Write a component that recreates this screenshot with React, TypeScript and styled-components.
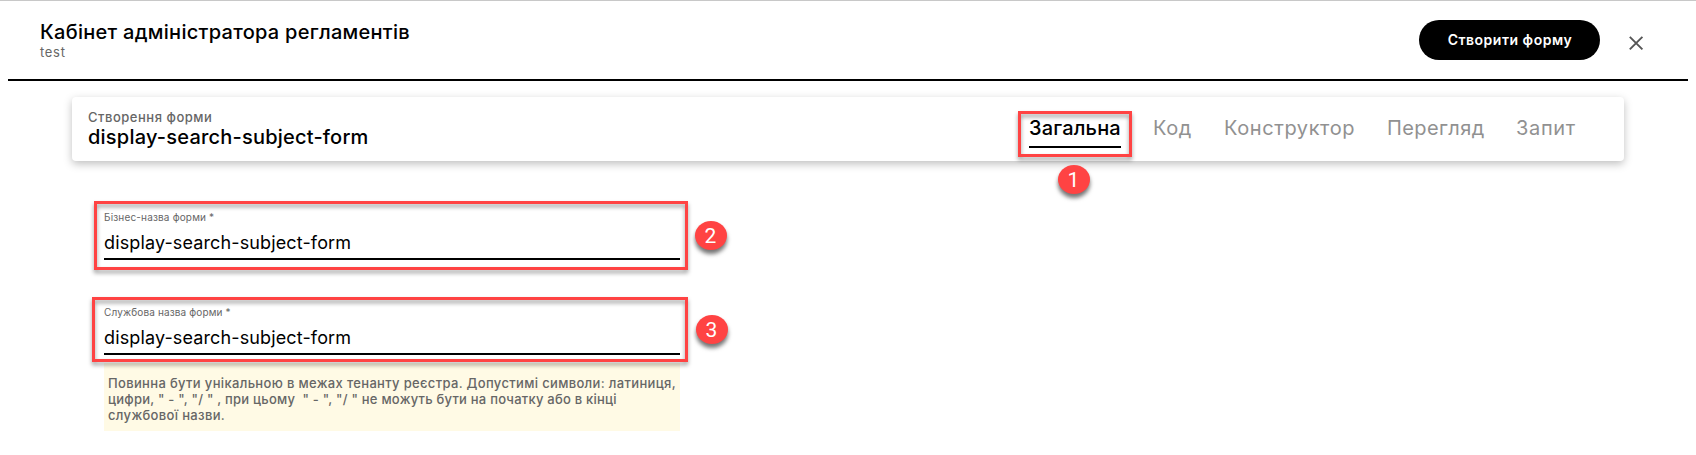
import React from "react";
import styled, { createGlobalStyle } from "styled-components";

const GlobalStyle = createGlobalStyle`
  * { box-sizing: border-box; }
  body { margin: 0; background: #fff; font-family: Inter, "Noto Sans", sans-serif; color: #000; }
`;

const Page = styled.div`
  height: 455px;
  padding: 0 8px;
  border-top: 1px solid #c8c8c8;
  overflow: hidden;
`;

const Header = styled.header`
  display: flex;
  justify-content: space-between;
  align-items: flex-start;
  height: 80px;
  padding: 19px 40px 0 32px;
  border-bottom: 2px solid #000;
`;

const Text = styled.div<{ $size: number; $line: number; $spacing?: number; $weight?: number; $muted?: boolean }>`
  font-size: ${(p) => p.$size}px;
  line-height: ${(p) => p.$line}px;
  letter-spacing: ${(p) => p.$spacing ?? 0}px;
  font-weight: ${(p) => p.$weight ?? 400};
  color: ${(p) => (p.$muted ? "#666" : "#000")};
  white-space: pre;
`;

const Actions = styled.div`
  display: flex;
  gap: 24px;
`;

const PrimaryButton = styled.button`
  width: 181px;
  height: 40px;
  padding: 0 0 0 1px;
  border: 0;
  border-radius: 20px;
  background: #000;
  color: #fff;
  font: 600 14px/20px Inter, sans-serif;
  letter-spacing: 0.5px;
`;

const CloseButton = styled.button`
  display: flex;
  width: 24px;
  height: 24px;
  margin-top: 11px;
  padding: 0;
  border: 0;
  background: none;
`;

const Card = styled.section`
  display: flex;
  justify-content: space-between;
  height: 64px;
  margin: 16px 64px 0;
  padding: 12px 48px 0 16px;
  border-radius: 4px;
  background: #fff;
  box-shadow: 0 3px 8px rgba(0, 0, 0, 0.25);
`;

const Tabs = styled.nav`
  display: flex;
  gap: 32px;
  padding-top: 7px;
`;

const Tab = styled.div<{ $width: number; $spacing: number; $active?: boolean }>`
  position: relative;
  width: ${(p) => p.$width}px;
  height: 32px;
  border-bottom: 2px solid ${(p) => (p.$active ? "#000" : "transparent")};
  font-size: 20px;
  line-height: 24px;
  font-weight: ${(p) => (p.$active ? 500 : 400)};
  letter-spacing: ${(p) => p.$spacing}px;
  color: ${(p) => (p.$active ? "#000" : "#919191")};
  white-space: nowrap;
`;

const Form = styled.form`
  display: flex;
  flex-direction: column;
  gap: 46px;
  width: 576px;
  margin: 50px 0 0 96px;
`;

const Field = styled.div`
  position: relative;
`;

const FieldValue = styled.div`
  height: 30px;
  margin-top: 7px;
  border-bottom: 2px solid #000;
  font-size: 18px;
  line-height: 26px;
  letter-spacing: 0.13px;
`;

const Hint = styled.div`
  margin-top: 8px;
  padding: 12px 4px 8px;
  background: #fffae5;
`;

const Frame = styled.div<{ $top: number; $left: number; $width: number; $height: number }>`
  position: absolute;
  top: ${(p) => p.$top}px;
  left: ${(p) => p.$left}px;
  width: ${(p) => p.$width}px;
  height: ${(p) => p.$height}px;
  border: 3px solid #ff4343;
  filter: drop-shadow(0 3.5px 2px rgba(0, 0, 0, 0.4));
  pointer-events: none;
`;

const Badge = styled.div<{ $top: number; $left: number }>`
  position: absolute;
  top: ${(p) => p.$top}px;
  left: ${(p) => p.$left}px;
  width: 32px;
  height: 29px;
  border-radius: 50%;
  background: #ff4343;
  box-shadow: 0 4px 4px rgba(0, 0, 0, 0.55);
  color: #fff;
  font: 400 21px/30px Roboto, sans-serif;
  letter-spacing: 0;
  text-align: center;
`;

const tabs = [
  { label: "Код", width: 39, spacing: 0.6 },
  { label: "Конструктор", width: 131, spacing: 0.58 },
  { label: "Перегляд", width: 97, spacing: 0.42 },
  { label: "Запит", width: 60, spacing: 0.65 },
];

export default function App() {
  return (
    <>
      <GlobalStyle />
      <Page>
        <Header>
          <div>
            <Text $size={20} $line={24} $weight={500} $spacing={0.28}>Кабінет адміністратора регламентів</Text>
            <Text $size={13} $line={16} $spacing={0.7} $muted>test</Text>
          </div>
          <Actions>
            <PrimaryButton>Створити форму</PrimaryButton>
            <CloseButton aria-label="Закрити">
              <svg width="24" height="24" viewBox="0 0 24 24" stroke="#555" strokeWidth="1.9">
                <path d="M5.8 5.8 18.4 18.4M18.4 5.8 5.8 18.4" />
              </svg>
            </CloseButton>
          </Actions>
        </Header>
        <Card>
          <div>
            <Text $size={13} $line={16} $weight={500} $spacing={0.52} $muted>Створення форми</Text>
            <Text $size={20} $line={24} $weight={500} $spacing={0.21}>display-search-subject-form</Text>
          </div>
          <Tabs>
            <Tab $width={92} $spacing={0.18} $active>
              Загальна
              <Frame $top={-5} $left={-11} $width={114} $height={46} />
              <Badge $top={48.5} $left={28.5}>1</Badge>
            </Tab>
            {tabs.map((t) => (
              <Tab key={t.label} $width={t.width} $spacing={t.spacing}>{t.label}</Tab>
            ))}
          </Tabs>
        </Card>
        <Form>
          <Field>
            <Text $size={10} $line={12} $spacing={0.17} $muted>Бізнес-назва форми *</Text>
            <FieldValue>display-search-subject-form</FieldValue>
            <Frame $top={-10} $left={-10} $width={594} $height={69} />
            <Badge $top={10} $left={590.5}>2</Badge>
          </Field>
          <Field>
            <Text $size={10} $line={12} $spacing={0.14} $muted>Службова назва форми *</Text>
            <FieldValue>display-search-subject-form</FieldValue>
            <Hint>
              <Text $size={13} $line={16} $weight={500} $spacing={0.34} $muted>Повинна бути унікальною в межах тенанту реєстра. Допустимі символи: латиниця,</Text>
              <Text $size={13} $line={16} $weight={500} $spacing={0.23} $muted>{'цифри, " - ", "/ " , при цьому\u00a0 " - ", "/ " не можуть бути на початку або в кінці'}</Text>
              <Text $size={13} $line={16} $weight={500} $spacing={0.34} $muted>службової назви.</Text>
            </Hint>
            <Frame $top={-9} $left={-12} $width={596} $height={65} />
            <Badge $top={8.5} $left={591.5}>3</Badge>
          </Field>
        </Form>
      </Page>
    </>
  );
}
